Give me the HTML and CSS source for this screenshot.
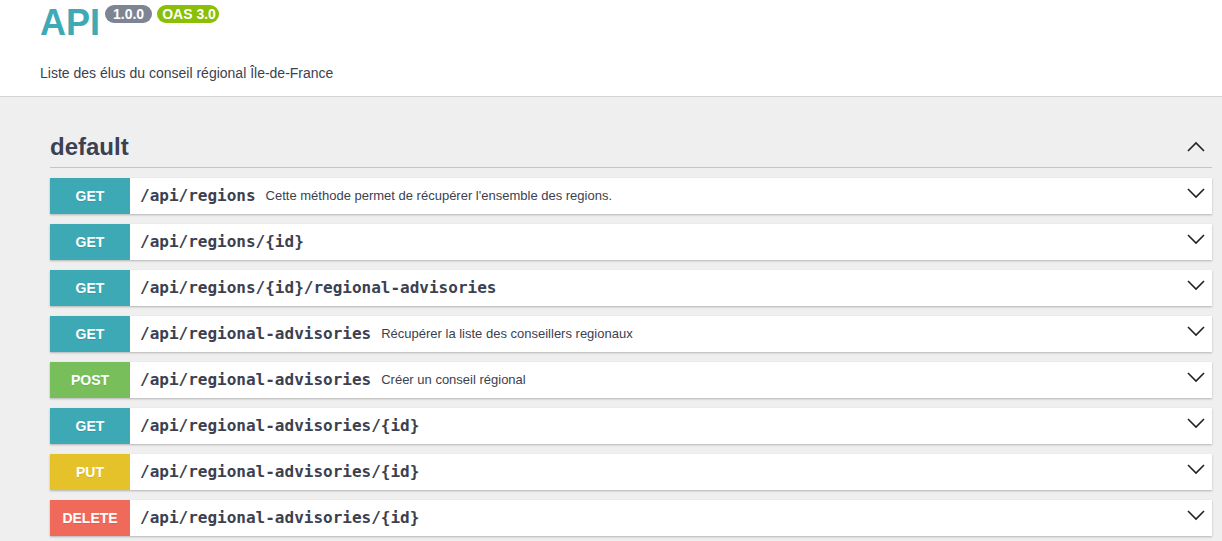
FILE: index.html
```html
<!DOCTYPE html>
<html lang="fr">
<head>
<meta charset="utf-8">
<title>API</title>
<link rel="stylesheet" href="styles.css">
</head>
<body>
<header class="info">
  <div class="title-row">
    <h1 class="title">API</h1>
    <span class="badge badge-version">1.0.0</span>
    <span class="badge badge-oas">OAS 3.0</span>
  </div>
  <p class="description">Liste des élus du conseil régional Île-de-France</p>
</header>
<main class="content">
  <section class="tag-section">
    <div class="tag">
      <h2 class="tag-name">default</h2>
      <svg class="arrow" viewBox="0 0 20 20" width="20" height="20"><polyline points="2,14 10,6 18,14" /></svg>
    </div>
    <div class="ops">
      <div class="op">
        <span class="method get">GET</span>
        <span class="path">/api/regions</span>
        <span class="summary">Cette méthode permet de récupérer l'ensemble des regions.</span>
        <svg class="arrow op-arrow" viewBox="0 0 20 20" width="20" height="20"><polyline points="2,6 10,14 18,6" /></svg>
      </div>
      <div class="op">
        <span class="method get">GET</span>
        <span class="path">/api/regions/{id}</span>
        <svg class="arrow op-arrow" viewBox="0 0 20 20" width="20" height="20"><polyline points="2,6 10,14 18,6" /></svg>
      </div>
      <div class="op">
        <span class="method get">GET</span>
        <span class="path">/api/regions/{id}/regional-advisories</span>
        <svg class="arrow op-arrow" viewBox="0 0 20 20" width="20" height="20"><polyline points="2,6 10,14 18,6" /></svg>
      </div>
      <div class="op">
        <span class="method get">GET</span>
        <span class="path">/api/regional-advisories</span>
        <span class="summary">Récupérer la liste des conseillers regionaux</span>
        <svg class="arrow op-arrow" viewBox="0 0 20 20" width="20" height="20"><polyline points="2,6 10,14 18,6" /></svg>
      </div>
      <div class="op">
        <span class="method post">POST</span>
        <span class="path">/api/regional-advisories</span>
        <span class="summary">Créer un conseil régional</span>
        <svg class="arrow op-arrow" viewBox="0 0 20 20" width="20" height="20"><polyline points="2,6 10,14 18,6" /></svg>
      </div>
      <div class="op">
        <span class="method get">GET</span>
        <span class="path">/api/regional-advisories/{id}</span>
        <svg class="arrow op-arrow" viewBox="0 0 20 20" width="20" height="20"><polyline points="2,6 10,14 18,6" /></svg>
      </div>
      <div class="op">
        <span class="method put">PUT</span>
        <span class="path">/api/regional-advisories/{id}</span>
        <svg class="arrow op-arrow" viewBox="0 0 20 20" width="20" height="20"><polyline points="2,6 10,14 18,6" /></svg>
      </div>
      <div class="op">
        <span class="method delete">DELETE</span>
        <span class="path">/api/regional-advisories/{id}</span>
        <svg class="arrow op-arrow" viewBox="0 0 20 20" width="20" height="20"><polyline points="2,6 10,14 18,6" /></svg>
      </div>
    </div>
  </section>
</main>
</body>
</html>
```
FILE: styles.css
```css
html, body {
  margin: 0;
  padding: 0;
}
body {
  font-family: "Liberation Sans", Arial, sans-serif;
  color: #3b4151;
  background: #efefef;
  height: 541px;
  overflow: hidden;
}
.info {
  background: #ffffff;
  padding: 0 40px 13px 40px;
  border-bottom: 1px solid #d4d4d4;
}
.title-row {
  display: flex;
  align-items: flex-start;
  gap: 5px;
}
.title {
  margin: 0;
  font-size: 36px;
  line-height: 46px;
  font-weight: bold;
  color: #3fa9b6;
}
.badge {
  margin-top: 5px;
  height: 18px;
  line-height: 18px;
  border-radius: 9px;
  color: #ffffff;
  font-size: 14px;
  font-weight: bold;
}
.badge-version {
  background: #7d8492;
  padding: 0 8px 0 8px;
}
.badge-oas {
  background: #89bf04;
  padding: 0 3px 0 5px;
}
.description {
  margin: 17px 0 0 0;
  font-size: 14px;
  line-height: 20px;
  color: #3b4151;
}
.content {
  padding: 35px 10px 0 50px;
}
.tag {
  display: flex;
  align-items: center;
  justify-content: space-between;
  border-bottom: 1px solid #c4c5c9;
  padding: 0 6px 5px 0;
}
.tag-name {
  margin: 0;
  font-size: 24px;
  line-height: 30px;
  font-weight: bold;
  color: #3b4151;
}
.arrow {
  display: block;
  fill: none;
  stroke: #222222;
  stroke-width: 1.6;
}
.tag .arrow {
  margin-top: -1px;
}
.ops {
  display: flex;
  flex-direction: column;
  gap: 10px;
  padding-top: 10px;
}
.op {
  display: flex;
  align-items: center;
  height: 36px;
  background: #ffffff;
  box-shadow: 0 1px 2px rgba(0, 0, 0, 0.25);
}
.method {
  align-self: stretch;
  flex: 0 0 80px;
  display: flex;
  align-items: center;
  justify-content: center;
  color: #ffffff;
  font-size: 14px;
  font-weight: bold;
  text-shadow: 0 1px 0 rgba(0, 0, 0, 0.1);
}
.get { background: #3ca9b4; }
.post { background: #78bf5c; }
.put { background: #e5c22a; }
.delete { background: #ef6a5a; }
.path {
  padding-left: 10px;
  margin-top: -1px;
  font-family: "DejaVu Sans Mono", "Liberation Mono", monospace;
  font-weight: bold;
  font-size: 16px;
  color: #3b4151;
}
.summary {
  padding-left: 10px;
  margin-top: -1px;
  font-size: 13px;
  color: #3b4151;
}
.op-arrow {
  margin-left: auto;
  margin-right: 6px;
  margin-top: -6px;
}
```
